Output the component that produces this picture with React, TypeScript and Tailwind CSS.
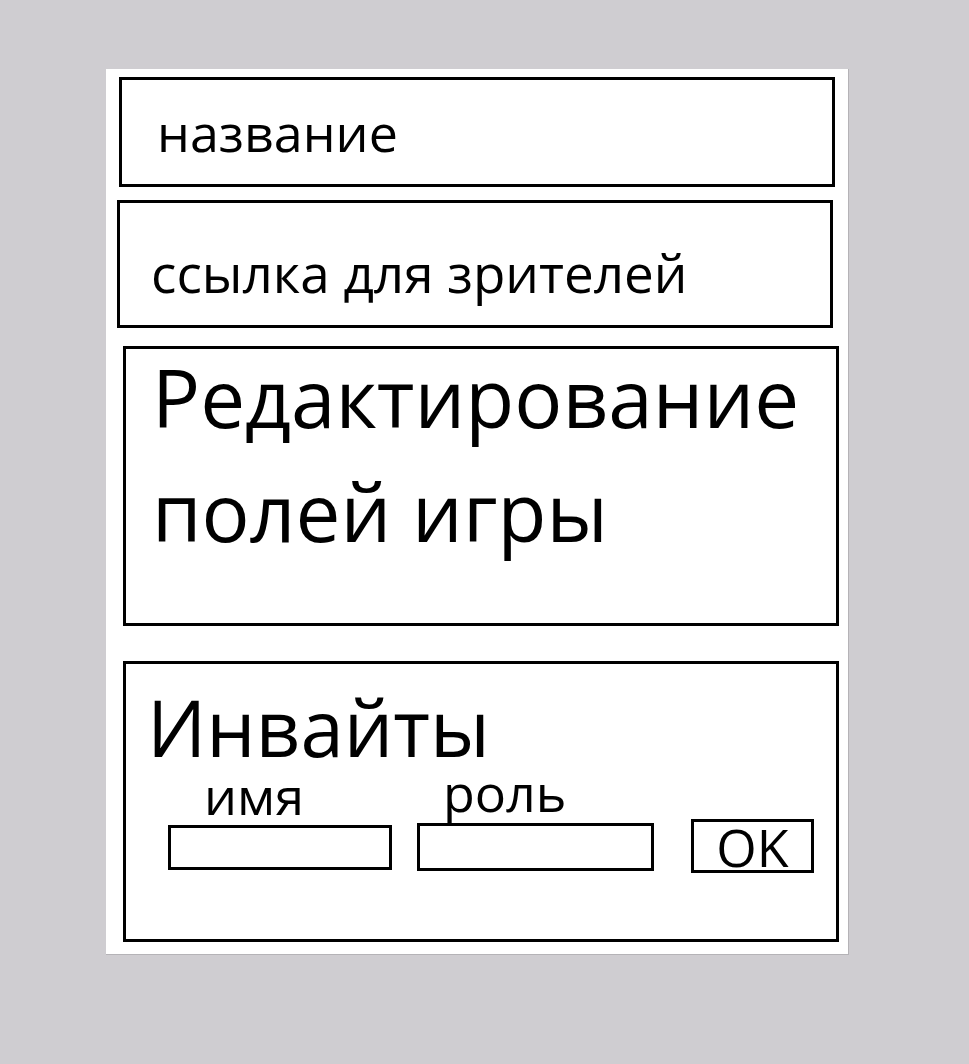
const App = () => {
  return (
    <div
      className="min-h-[1064px] w-full bg-[#cfcdd1] pt-[69px] pl-[106px]"
      style={{ fontFamily: '"Open Sans", "Noto Sans", sans-serif' }}
    >
      <div className="w-[743px] h-[886px] bg-white border-r border-b border-[#b5b3b7] pt-[8px] flex flex-col text-black">
        <div className="ml-[13px] w-[716px] h-[110px] border-[3px] border-black pl-[35px] pt-[26px]">
          <span className="block text-[52px] leading-[52px]">название</span>
        </div>
        <div className="ml-[11px] mt-[13px] w-[716px] h-[128px] border-[3px] border-black pl-[31px] pt-[43px]">
          <span className="block text-[53px] leading-[53px]">ссылка для зрителей</span>
        </div>
        <div className="ml-[17px] mt-[18px] w-[716px] h-[280px] border-[3px] border-black pl-[26px]">
          <p className="text-[80px]">
            <span className="block leading-[96px]">Редактирование</span>
            <span className="block leading-[132px]">полей игры</span>
          </p>
        </div>
        <div className="ml-[17px] mt-[35px] w-[716px] h-[281px] border-[3px] border-black pt-[31px]">
          <p className="pl-[21px] text-[78px] leading-[64px]">Инвайты</p>
          <div className="flex items-start pl-[42px]">
            <div className="flex flex-col mt-[16px]">
              <span className="pl-[36px] text-[52px] leading-[40px]">имя</span>
              <div className="mt-[10px] w-[224px] h-[45px] border-[3px] border-black" />
            </div>
            <div className="flex flex-col ml-[25px] mt-[13px]">
              <span className="pl-[26px] text-[52px] leading-[40px]">роль</span>
              <div className="mt-[11px] w-[237px] h-[48px] border-[3px] border-black" />
            </div>
            <button className="ml-[37px] mt-[60px] w-[123px] h-[54px] border-[3px] border-black flex items-center justify-center text-[52px] leading-none pt-[2px]">
              OK
            </button>
          </div>
        </div>
      </div>
    </div>
  );
};

export default App;
